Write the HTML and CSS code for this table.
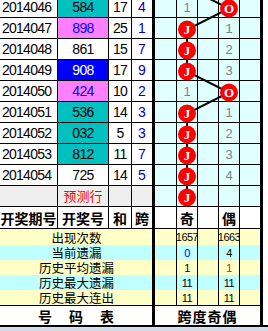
FILE: index.html
```html
<!DOCTYPE html>
<html lang="zh">
<head>
<meta charset="utf-8">
<title>奇偶走势</title>
<link rel="stylesheet" href="styles.css">
</head>
<body>
<div class="sheet">
  <div class="grid">
    <div class="c date">2014046</div><div class="c num teal">584</div><div class="c sum">17</div><div class="c span">4</div>
    <div class="c ch"></div><div class="c ch miss">1</div><div class="c ch"></div><div class="c ch"></div><div class="c ch thick"></div><div class="c gap"></div>

    <div class="c date">2014047</div><div class="c num pink">898</div><div class="c sum">25</div><div class="c span">1</div>
    <div class="c ch"></div><div class="c ch"></div><div class="c ch"></div><div class="c ch miss">1</div><div class="c ch thick"></div><div class="c gap"></div>

    <div class="c date">2014048</div><div class="c num">861</div><div class="c sum">15</div><div class="c span">7</div>
    <div class="c ch"></div><div class="c ch"></div><div class="c ch"></div><div class="c ch miss">2</div><div class="c ch thick"></div><div class="c gap"></div>

    <div class="c date">2014049</div><div class="c num blue">908</div><div class="c sum">17</div><div class="c span">9</div>
    <div class="c ch"></div><div class="c ch"></div><div class="c ch"></div><div class="c ch miss">3</div><div class="c ch thick"></div><div class="c gap"></div>

    <div class="c date">2014050</div><div class="c num pink">424</div><div class="c sum">10</div><div class="c span">2</div>
    <div class="c ch"></div><div class="c ch miss">1</div><div class="c ch"></div><div class="c ch"></div><div class="c ch thick"></div><div class="c gap"></div>

    <div class="c date">2014051</div><div class="c num teal">536</div><div class="c sum">14</div><div class="c span">3</div>
    <div class="c ch"></div><div class="c ch"></div><div class="c ch"></div><div class="c ch miss">1</div><div class="c ch thick"></div><div class="c gap"></div>

    <div class="c date">2014052</div><div class="c num teal">032</div><div class="c sum">5</div><div class="c span">3</div>
    <div class="c ch"></div><div class="c ch"></div><div class="c ch"></div><div class="c ch miss">2</div><div class="c ch thick"></div><div class="c gap"></div>

    <div class="c date">2014053</div><div class="c num teal">812</div><div class="c sum">11</div><div class="c span">7</div>
    <div class="c ch"></div><div class="c ch"></div><div class="c ch"></div><div class="c ch miss">3</div><div class="c ch thick"></div><div class="c gap"></div>

    <div class="c date">2014054</div><div class="c num">725</div><div class="c sum">14</div><div class="c span">5</div>
    <div class="c ch"></div><div class="c ch"></div><div class="c ch"></div><div class="c ch miss">4</div><div class="c ch thick"></div><div class="c gap"></div>

    <div class="c date grey"></div><div class="c num grey predict">预测行</div><div class="c sum grey"></div><div class="c span grey"></div>
    <div class="c ch grey"></div><div class="c ch grey"></div><div class="c ch grey"></div><div class="c ch grey"></div><div class="c ch grey thick"></div><div class="c gap"></div>

    <div class="c head">开奖期号</div><div class="c head">开奖号</div><div class="c head">和</div><div class="c head span-h">跨</div>
    <div class="c head"></div><div class="c head">奇</div><div class="c head"></div><div class="c head">偶</div><div class="c head thick"></div><div class="c gap"></div>

    <div class="c label yellow">出现次数</div>
    <div class="c st yellow"></div><div class="c st yellow val">1657</div><div class="c st yellow"></div><div class="c st yellow val">1663</div><div class="c st yellow thick"></div><div class="c gap"></div>

    <div class="c label cyan">当前遗漏</div>
    <div class="c st cyan"></div><div class="c st cyan val v-blue">0</div><div class="c st cyan"></div><div class="c st cyan val">4</div><div class="c st cyan thick"></div><div class="c gap"></div>

    <div class="c label yellow">历史平均遗漏</div>
    <div class="c st yellow"></div><div class="c st yellow val">1</div><div class="c st yellow"></div><div class="c st yellow val v-red">1</div><div class="c st yellow thick"></div><div class="c gap"></div>

    <div class="c label cyan">历史最大遗漏</div>
    <div class="c st cyan"></div><div class="c st cyan val">11</div><div class="c st cyan"></div><div class="c st cyan val">11</div><div class="c st cyan thick"></div><div class="c gap"></div>

    <div class="c label yellow last">历史最大连出</div>
    <div class="c st yellow last"></div><div class="c st yellow val last">11</div><div class="c st yellow last"></div><div class="c st yellow val last">11</div><div class="c st yellow thick last"></div><div class="c gap"></div>

    <div class="c foot-l">号码表</div>
    <div class="c foot-r">跨度奇偶</div><div class="c gap foot-gap"></div>

    <div class="strip"></div>
  </div>

  <svg class="chart" width="268" height="240" viewBox="0 0 268 240">
    <polyline class="trend" points="187,-9.5 229,11.5 187,32.5 187,53.5 187,74.5 229,95.5 187,116.5 187,137.5 187,158.5 187,179.5 187,200.5"/>
    <g class="ball">
      <circle cx="229" cy="11.5" r="9"/><text x="229" y="16">O</text>
      <circle cx="187" cy="32.5" r="9"/><text x="187" y="37">J</text>
      <circle cx="187" cy="53.5" r="9"/><text x="187" y="58">J</text>
      <circle cx="187" cy="74.5" r="9"/><text x="187" y="79">J</text>
      <circle cx="229" cy="95.5" r="9"/><text x="229" y="100">O</text>
      <circle cx="187" cy="116.5" r="9"/><text x="187" y="121">J</text>
      <circle cx="187" cy="137.5" r="9"/><text x="187" y="142">J</text>
      <circle cx="187" cy="158.5" r="9"/><text x="187" y="163">J</text>
      <circle cx="187" cy="179.5" r="9"/><text x="187" y="184">J</text>
      <circle cx="187" cy="200.5" r="9"/><text x="187" y="205">J</text>
    </g>
  </svg>
</div>
</body>
</html>
```
FILE: styles.css
```css
html, body {
  margin: 0;
  padding: 0;
  background: #ffffff;
  overflow: hidden;
}

.sheet {
  position: relative;
  width: 268px;
  margin-top: -3px;
}

.grid {
  display: grid;
  grid-template-columns: 58px 51px 23px 23px 22px 21px 21px 21px 23px 5px;
  grid-template-rows: repeat(10, 21px) 22px 16px 15px 15px 15px 16px 21px 6px;
  font-family: "Liberation Sans", Arial, sans-serif;
  font-size: 14px;
  color: #000;
}

.c {
  box-sizing: border-box;
  border-right: 1px solid #000;
  border-bottom: 1px solid #000;
  display: flex;
  align-items: center;
  justify-content: center;
  background: #ffffff;
  overflow: hidden;
  white-space: nowrap;
  line-height: 16px;
}

.date {
  justify-content: flex-start;
  padding-left: 2px;
  letter-spacing: -0.75px;
}

.num {
  letter-spacing: -0.6px;
}

.sum {
  letter-spacing: -0.7px;
}

.span {
  border-right-width: 3px;
  color: #0000c8;
}

.teal { background: #00c0c0; }
.pink { background: #ff80ff; color: #0000ff; }
.blue { background: #0000ff; color: #ffffff; }
.grey { background: #efefef; }

.predict {
  color: #ff0000;
  font-family: "Noto Sans CJK SC", sans-serif;
  font-size: 13px;
  letter-spacing: 0;
}

.ch {
  background: #e0ffff;
}

.thick {
  border-right-width: 3px;
}

.miss {
  color: #808080;
  font-size: 13px;
  padding-top: 1px;
}

.gap {
  border: 0;
  background: #ffffff;
}

.head {
  font-family: "Noto Sans CJK SC", sans-serif;
  font-weight: 700;
  font-size: 14px;
  letter-spacing: 0;
}

.span-h {
  border-right-width: 3px;
}

.label {
  grid-column: 1 / 5;
  border-right-width: 3px;
  border-bottom: 0;
  font-family: "Noto Sans CJK SC", sans-serif;
  font-size: 12.5px;
  line-height: 13px;
  padding-left: 1px;
}

.st {
  border-bottom: 0;
}

.last {
  border-bottom: 1px solid #000;
}

.yellow { background: #ffffc8; }
.cyan { background: #c0ffff; }

.val {
  font-family: "Liberation Sans Narrow", "Liberation Sans", sans-serif;
  font-size: 11px;
  line-height: 12px;
  letter-spacing: -0.5px;
}

.v-blue { color: #0000ff; }
.v-red { color: #ff0000; }

.foot-l {
  grid-column: 1 / 5;
  border-right-width: 3px;
  border-bottom-width: 2px;
  font-family: "Noto Sans CJK SC", sans-serif;
  font-weight: 700;
  font-size: 14px;
  letter-spacing: 17px;
  padding-left: 17px;
}

.foot-r {
  grid-column: 5 / 10;
  border-right-width: 3px;
  border-bottom-width: 2px;
  font-family: "Noto Sans CJK SC", sans-serif;
  font-weight: 700;
  font-size: 14px;
  letter-spacing: 1px;
}

.foot-gap {
  border-bottom: 2px solid #000;
}

.strip {
  grid-column: 1 / -1;
  background: linear-gradient(#d8e0ea, #c8d2de);
}

.chart {
  position: absolute;
  top: 0;
  left: 0;
  overflow: visible;
  pointer-events: none;
}

.trend {
  fill: none;
  stroke: #000;
  stroke-width: 2;
}

.ball circle {
  fill: #ff0000;
}

.ball text {
  fill: #ffffff;
  font-family: "Liberation Serif", serif;
  font-weight: 700;
  font-size: 13px;
  text-anchor: middle;
}
```
